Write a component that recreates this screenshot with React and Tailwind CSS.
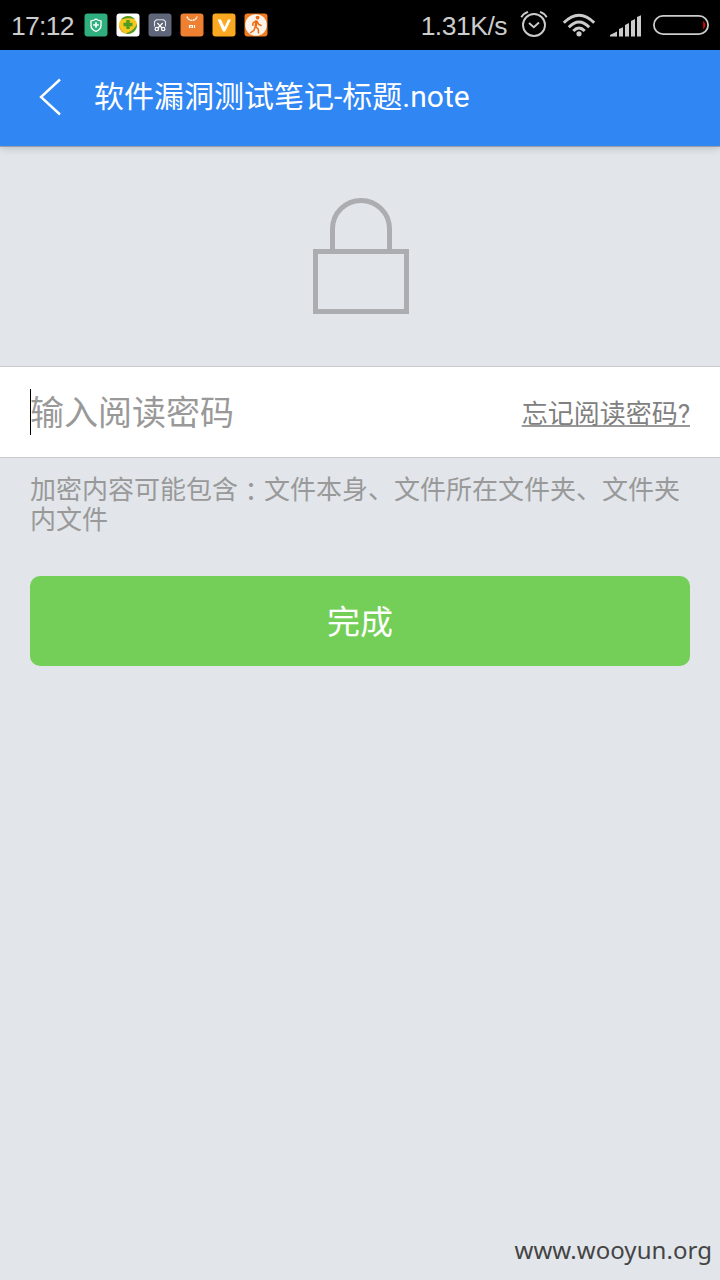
import React, { useState } from "react";

const ShieldIcon = () => (
  <svg width="24" height="24" viewBox="0 0 24 24" fill="none">
    <rect x="0.5" y="0.5" width="23" height="23" rx="3" fill="#2fae7e" />
    <path
      d="M12 6 C10.5 7.2 8.5 7.7 7 7.8 V12.5 C7 15.5 9 17.2 12 18.5 C15 17.2 17 15.5 17 12.5 V7.8 C15.5 7.7 13.5 7.2 12 6 Z"
      stroke="#fff"
      strokeWidth="1.3"
    />
    <path d="M12 9.2 V14.8 M9.2 12 H14.8" stroke="#fff" strokeWidth="1.7" />
  </svg>
);

const SafeIcon = () => (
  <svg width="24" height="24" viewBox="0 0 24 24" fill="none">
    <rect x="0.5" y="0.5" width="23" height="23" rx="3" fill="#fff" />
    <circle cx="12" cy="12" r="9" fill="#f7c81e" />
    <path d="M5 6.5 C8 2.2 15 1.6 19 6 C15 4.8 11 5 5 6.5 Z" fill="#4d9a2c" />
    <path d="M21 11 C21.5 17 16 22.5 9 20.5 C14 19.5 18.5 16 21 11 Z" fill="#4d9a2c" />
    <path d="M3 12 C3 17 7 20 9 20.5 C5.5 18 4 15 3 12 Z" fill="#e88a12" />
    <path d="M12 7 V16 M7.5 11.5 H16.5" stroke="#4f9d22" strokeWidth="3.4" />
  </svg>
);

const ScissorsIcon = () => (
  <svg width="24" height="24" viewBox="0 0 24 24" fill="none">
    <rect x="0.5" y="0.5" width="23" height="23" rx="3" fill="#5f6679" />
    <path d="M6.5 13.5 V8.5 L8.5 6.8 H15.5 L17.5 8.5 V13.5" stroke="#e6e8ec" strokeWidth="1.1" />
    <path d="M9.3 10 L14 15 M14.7 10 L10 15" stroke="#fff" strokeWidth="1.2" />
    <circle cx="8.8" cy="16" r="1.7" stroke="#fff" strokeWidth="1.2" />
    <circle cx="15.2" cy="16" r="1.7" stroke="#fff" strokeWidth="1.2" />
  </svg>
);

const MarketIcon = () => (
  <svg width="24" height="24" viewBox="0 0 24 24" fill="none">
    <rect x="0.5" y="0.5" width="23" height="23" rx="3" fill="#f08031" />
    <path d="M7 3.5 C8 8.6 16 8.6 17 3.5" stroke="#fff" strokeWidth="1.3" strokeDasharray="2 0.5" />
    <path d="M9.5 15 V12.5 H12.5 V15 M11 13.5 V15 M14.5 12 V15" stroke="#fff" strokeWidth="1.1" />
  </svg>
);

const VIcon = () => (
  <svg width="24" height="24" viewBox="0 0 24 24" fill="none">
    <rect x="0.5" y="0.5" width="23" height="23" rx="3" fill="#faa920" />
    <path d="M5.5 6.5 H9 L12.5 14 L16 6.5 H19 L13.2 18.5 H11 Z" fill="#fff" />
  </svg>
);

const RunnerIcon = () => (
  <svg width="24" height="24" viewBox="0 0 24 24" fill="none">
    <rect x="0.5" y="0.5" width="23" height="23" rx="3" fill="#f47b20" />
    <circle cx="12" cy="12" r="10.8" fill="#fdf3ea" />
    <circle cx="13.6" cy="4.6" r="1.9" fill="#ee6b12" />
    <path d="M12.7 7.5 L11.6 13.5" stroke="#ee6b12" strokeWidth="2.6" />
    <path
      d="M12.5 7.8 L9.2 9.8 L8.6 12.8 M13 8.5 L14.8 11.5 L17.6 12.8 M11.5 13.5 L14.2 16 L14.6 20.5 M11.3 13.5 L10 17.3 L6.2 20"
      stroke="#ee6b12"
      strokeWidth="1.5"
    />
  </svg>
);

const AlarmIcon = () => (
  <svg width="28" height="28" viewBox="0 0 28 28" fill="none" stroke="#ccc">
    <circle cx="14" cy="15" r="11" strokeWidth="1.9" />
    <path d="M9 13 L13.8 17.2 L19 12.5" strokeWidth="1.9" />
    <path d="M1.3 7.2 Q3.3 3.5 8 1.8 M26.7 7.2 Q24.7 3.5 20 1.8" strokeWidth="1.9" />
  </svg>
);

const WifiIcon = () => (
  <svg width="34" height="24" viewBox="0 0 34 24" fill="none" stroke="#ccc">
    <path d="M1.8 9.8 Q17 -5.4 32.2 9.8" strokeWidth="3" />
    <path d="M6.8 14.2 Q17 3.6 27.2 14.2" strokeWidth="3" />
    <path d="M11.3 18 Q17 12 22.7 18" strokeWidth="3" />
    <circle cx="17" cy="20.8" r="2.6" fill="#ccc" stroke="none" />
  </svg>
);

const SignalIcon = () => (
  <svg width="32" height="22" viewBox="0 0 32 22" fill="#ccc">
    <path d="M0 21.5 V20 L7 16.5 V21.5 Z" />
    <path d="M9 21.5 V14 L13 12.2 V21.5 Z" />
    <path d="M15 21.5 V10 L19 8 V21.5 Z" />
    <path d="M21 21.5 V6 L25 4 V21.5 Z" />
    <path d="M27 21.5 V2 L31 0.3 V21.5 Z" />
  </svg>
);

const BatteryIcon = () => (
  <svg width="56" height="20" viewBox="0 0 56 20" fill="none">
    <rect x="0.9" y="0.9" width="54.2" height="18.2" rx="9.1" stroke="#ccc" strokeWidth="1.8" />
    <path d="M50.2 5.8 Q54.4 10 50.2 14.4 Z" fill="#f00000" />
  </svg>
);

const StatusBar = () => {
  return (
    <div className="flex h-[50px] items-center justify-between bg-black pl-[11px] pr-[11px] font-['Liberation_Sans',sans-serif] text-[26.5px] text-[#ccc]">
      <div className="flex items-center">
        <span className="w-[73px] pt-[3px] tracking-[-0.7px]">17:12</span>
        <div className="flex gap-2">
          <ShieldIcon />
          <SafeIcon />
          <ScissorsIcon />
          <MarketIcon />
          <VIcon />
          <RunnerIcon />
        </div>
      </div>
      <div className="flex items-center">
        <span className="mr-[13px] pt-[3px] tracking-[-0.5px]">1.31K/s</span>
        <div className="mr-[14px] pb-[2px]">
          <AlarmIcon />
        </div>
        <div className="mr-[14px] pb-px">
          <WifiIcon />
        </div>
        <div className="mr-[11px] pt-px">
          <SignalIcon />
        </div>
        <BatteryIcon />
      </div>
    </div>
  );
};

const Header = ({ title }) => {
  return (
    <header className="relative flex h-24 items-center bg-[#3086f3] pb-[2px] pl-[38px] text-white shadow-[0_1px_0_#9a9ea6,0_2px_8px_rgba(0,0,0,0.2)]">
      <button type="button" className="mr-8">
        <svg width="24" height="38" viewBox="0 0 24 38" fill="none" className="block">
          <path d="M22 1.5 L3 19 L22 36.5" stroke="#fff" strokeWidth="2.4" />
        </svg>
      </button>
      <h1 className="whitespace-nowrap text-[30px] leading-[44px]">{title}</h1>
    </header>
  );
};

const LockIcon = () => (
  <svg width="96" height="116" viewBox="0 0 96 116" fill="none" stroke="#abadb1" strokeWidth="5">
    <path d="M19.5 52 V31 A28.5 28.5 0 0 1 76.5 31 V52" />
    <rect x="2.5" y="53.5" width="91" height="60" />
  </svg>
);

function App() {
  const [password, setPassword] = useState("");

  const handleSubmit = (event) => {
    event.preventDefault();
  };

  return (
    <div className="flex h-[1280px] w-[720px] flex-col overflow-hidden bg-[#e2e6eb] font-['Roboto','Noto_Sans_CJK_SC',sans-serif]">
      <StatusBar />
      <Header title="软件漏洞测试笔记-标题.note" />

      <div className="flex h-[220px] justify-center pl-[2px] pt-[52px]">
        <LockIcon />
      </div>

      <form onSubmit={handleSubmit}>
        <div className="flex h-[92px] items-center justify-between border-y border-[#c9cbce] bg-white px-[30px]">
          <div className="flex items-center">
            {/* Cursor */}
            <span className="-mr-px h-[46px] w-px bg-black" />
            <input
              type="password"
              value={password}
              onChange={(e) => setPassword(e.target.value)}
              placeholder="输入阅读密码"
              className="h-[50px] w-[400px] bg-transparent pt-[3px] text-[34px] outline-none placeholder:text-[#999]"
            />
          </div>
          <a
            href="#"
            className="whitespace-nowrap pt-[3px] text-[26px] leading-[38px] text-[#808080] underline decoration-[#999] decoration-2 underline-offset-[2px]"
          >
            忘记阅读密码?
          </a>
        </div>

        <p className="h-[76px] px-[30px] pt-[17px] text-[26px] leading-[30px] text-[#999]">
          加密内容可能包含<span className="align-[-2px] font-['Roboto','Noto_Sans_CJK_TC',sans-serif] leading-none">：</span>文件本身、文件所在文件夹、文件夹内文件
        </p>

        <button
          type="submit"
          className="mx-[30px] mt-[42px] block h-[90px] w-[660px] rounded-[10px] bg-[#73cf57] pt-1 text-[33px] text-white"
        >
          完成
        </button>
      </form>

      <footer className="mt-auto pb-[11px] pr-2 text-right font-['Noto_Sans',sans-serif] text-[24px] leading-[38px] tracking-[0.05px] text-[#444]">
        www.wooyun.org
      </footer>
    </div>
  );
}

export default App;
